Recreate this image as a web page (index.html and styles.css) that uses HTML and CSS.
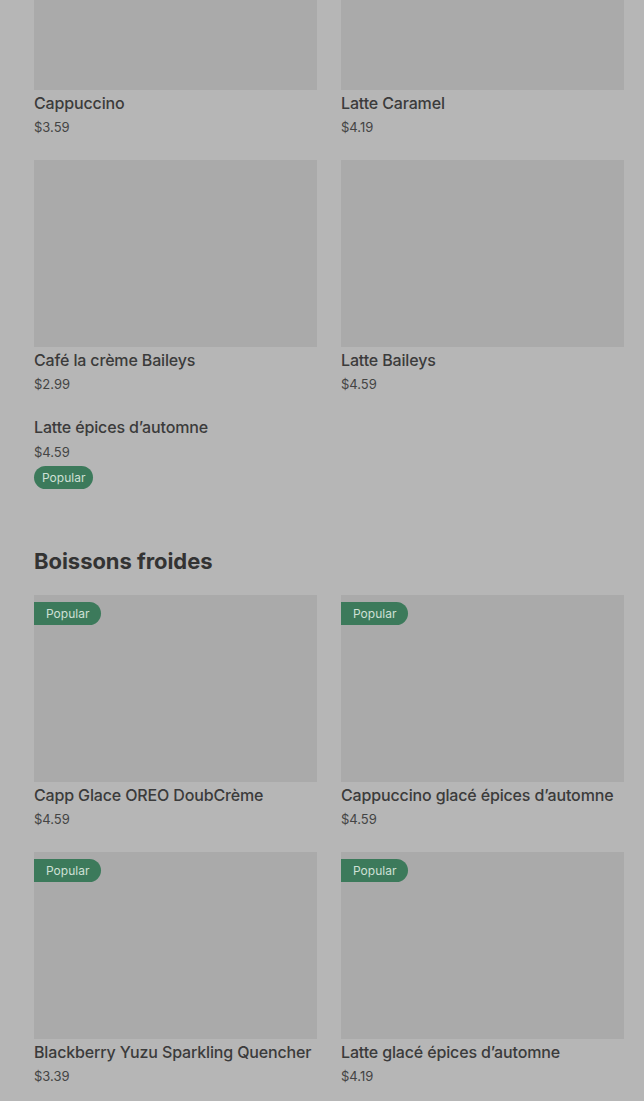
FILE: index.html
```html
<!DOCTYPE html>
<html lang="fr">
<head>
<meta charset="UTF-8" />
<meta name="viewport" content="width=device-width, initial-scale=1" />
<title>Menu</title>
<link rel="stylesheet" href="styles.css">
</head>
<body>
<main class="menu">
  <section class="section section--first">
    <div class="grid">
      <div class="item">
        <div class="item__image"></div>
        <h3 class="item__name">Cappuccino</h3>
        <p class="item__price">$3.59</p>
      </div>
      <div class="item">
        <div class="item__image"></div>
        <h3 class="item__name">Latte Caramel</h3>
        <p class="item__price">$4.19</p>
      </div>
      <div class="item">
        <div class="item__image"></div>
        <h3 class="item__name">Café la crème Baileys</h3>
        <p class="item__price">$2.99</p>
      </div>
      <div class="item">
        <div class="item__image"></div>
        <h3 class="item__name">Latte Baileys</h3>
        <p class="item__price">$4.59</p>
      </div>
      <div class="item">
        <h3 class="item__name">Latte épices d’automne</h3>
        <p class="item__price item__price--loose">$4.59</p>
        <span class="pill">Popular</span>
      </div>
    </div>
  </section>

  <section class="section">
    <h2 class="section__title">Boissons froides</h2>
    <div class="grid">
      <div class="item">
        <div class="item__image"><span class="tag">Popular</span></div>
        <h3 class="item__name">Capp Glace OREO DoubCrème</h3>
        <p class="item__price">$4.59</p>
      </div>
      <div class="item">
        <div class="item__image"><span class="tag">Popular</span></div>
        <h3 class="item__name">Cappuccino glacé épices d’automne</h3>
        <p class="item__price">$4.59</p>
      </div>
      <div class="item">
        <div class="item__image"><span class="tag">Popular</span></div>
        <h3 class="item__name">Blackberry Yuzu Sparkling Quencher</h3>
        <p class="item__price">$3.39</p>
      </div>
      <div class="item">
        <div class="item__image"><span class="tag">Popular</span></div>
        <h3 class="item__name">Latte glacé épices d’automne</h3>
        <p class="item__price">$4.19</p>
      </div>
    </div>
  </section>
</main>
</body>
</html>
```

FILE: styles.css
```css
/* fond assombri derrière un modal */
body {
  margin: 0;
  background: #b6b6b6;
  color: #3a3a3a;
  font-family: Inter, 'Noto Sans', sans-serif;
  overflow: hidden;
}
.menu {
  padding: 0 20px 0 34px;
  margin-top: -97px;
}
.section {
  margin-top: 56px;
}
.section--first {
  margin-top: 0;
}
.section__title {
  font-size: 22px;
  line-height: 32px;
  font-weight: 700;
  letter-spacing: -0.05px;
  color: #333;
  margin: 0 0 18px;
}
.grid {
  display: grid;
  grid-template-columns: 1fr 1fr;
  column-gap: 24px;
  row-gap: 24px;
}
.item__image {
  position: relative;
  height: 187px;
  background: #aaaaaa;
  margin-bottom: 3px;
}
.item__name {
  margin: 0;
  font-size: 16px;
  line-height: 20px;
  font-weight: 500;
  letter-spacing: -0.15px;
  color: #3b3b3b;
  white-space: nowrap;
}
.item__price {
  margin: 5px 0 0;
  font-size: 13px;
  line-height: 18px;
  color: #444;
}
.item__price--loose {
  margin-top: 6px;
}
.pill {
  display: inline-block;
  margin-top: 5px;
  background: #3c7a5b;
  color: #cfe0d6;
  font-size: 12px;
  line-height: 23px;
  padding: 0 8px;
  border-radius: 12px;
}
.tag {
  position: absolute;
  top: 7px;
  left: 0;
  background: #3c7a5b;
  color: #cfe0d6;
  font-size: 12px;
  line-height: 23px;
  padding: 0 12px;
  border-radius: 0 12px 12px 0;
}
```
